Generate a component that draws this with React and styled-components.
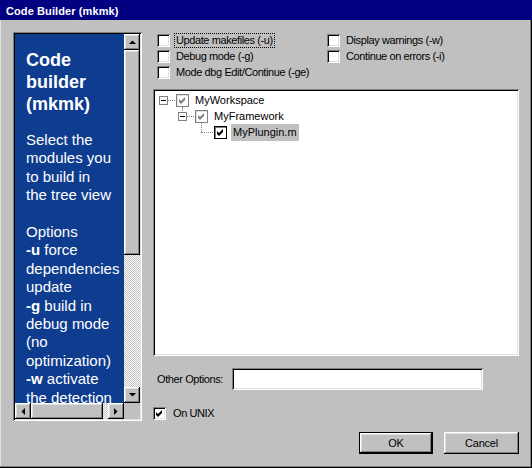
import React from 'react';
import styled, { createGlobalStyle, css } from 'styled-components';

const GlobalStyle = createGlobalStyle`
    html, body {
        margin: 0;
        padding: 0;
        background: #c0c0c0;
    }
    body {
        font-family: "Liberation Sans", Arial, sans-serif;
        font-size: 11px;
        color: #000;
    }
`;

const raised = css`
    box-shadow: inset -1px -1px #000, inset 1px 1px #fff,
        inset -2px -2px #808080, inset 2px 2px #dfdfdf;
`;

const sunken = css`
    box-shadow: inset 1px 1px #808080, inset -1px -1px #fff,
        inset 2px 2px #000, inset -2px -2px #dfdfdf;
`;

const checker = css`
    background: repeating-conic-gradient(#c0c0c0 0 25%, #fff 0 50%) 0 0 / 2px 2px;
`;

const Arrow = ({ dir }) => {
    const pts = {
        up: '0,4 7,4 3.5,0.5',
        down: '0,0 7,0 3.5,3.5',
        left: '4,0 4,7 0.5,3.5',
        right: '0,0 0,7 3.5,3.5',
    }[dir];
    const vertical = dir === 'up' || dir === 'down';
    return (
        <svg width={vertical ? 7 : 4} height={vertical ? 4 : 7}>
            <polygon points={pts} fill="#000" />
        </svg>
    );
};

const Check = ({ color = '#000' }) => (
    <svg width="13" height="13" viewBox="0 0 13 13">
        <path d="M3 5 L5 7 L9 3 L9 6 L5 10 L3 8 Z" fill={color} />
    </svg>
);

const Expander = () => (
    <svg width="9" height="9" viewBox="0 0 9 9">
        <rect x="0.5" y="0.5" width="8" height="8" fill="#fff" stroke="#808080" />
        <rect x="2" y="4" width="5" height="1" fill="#000" />
    </svg>
);

function App() {
    return (
        <>
            <GlobalStyle />
            <Window>
                <TitleBar>Code Builder (mkmk)</TitleBar>
                <Body>
                    <LeftPanel>
                        <Blue>
                            <Heading>
                                Code<br />builder<br />(mkmk)
                            </Heading>
                            <Text>
                                Select the<br />modules you<br />to build in<br />
                                the tree view<br /><br />Options<br />
                                <b>-u</b> force<br />dependencies<br />update<br />
                                <b>-g</b> build in<br />debug mode<br />(no<br />
                                optimization)<br />
                                <b>-w</b> activate<br />the detection
                            </Text>
                        </Blue>
                        <VScroll>
                            <ScrollBtn><Arrow dir="up" /></ScrollBtn>
                            <Thumb style={{ height: 205 }} />
                            <Track />
                            <ScrollBtn><Arrow dir="down" /></ScrollBtn>
                        </VScroll>
                        <HScroll>
                            <ScrollBtn><Arrow dir="left" /></ScrollBtn>
                            <Thumb style={{ width: 72 }} />
                            <Track />
                            <ScrollBtn><Arrow dir="right" /></ScrollBtn>
                        </HScroll>
                        <Corner />
                    </LeftPanel>

                    <RightPane>
                        <Options>
                            <OptionColumn>
                                <CheckRow>
                                    <Box />
                                    <Label focused>Update makefiles (-u)</Label>
                                </CheckRow>
                                <CheckRow>
                                    <Box />
                                    <Label>Debug mode (-g)</Label>
                                </CheckRow>
                                <CheckRow>
                                    <Box />
                                    <Label>Mode dbg Edit/Continue (-ge)</Label>
                                </CheckRow>
                            </OptionColumn>
                            <OptionColumn>
                                <CheckRow>
                                    <Box />
                                    <Label>Display warnings (-w)</Label>
                                </CheckRow>
                                <CheckRow>
                                    <Box />
                                    <Label>Continue on errors (-i)</Label>
                                </CheckRow>
                            </OptionColumn>
                        </Options>

                        <TreeBox>
                            <TreeRow level={0}>
                                <Joint>
                                    <Expander />
                                </Joint>
                                <TreeBoxCheck dim><Check color="#808080" /></TreeBoxCheck>
                                <NodeText>MyWorkspace</NodeText>
                            </TreeRow>
                            <TreeRow level={1}>
                                <Joint up>
                                    <Expander />
                                </Joint>
                                <TreeBoxCheck dim><Check color="#808080" /></TreeBoxCheck>
                                <NodeText>MyFramework</NodeText>
                            </TreeRow>
                            <TreeRow level={2}>
                                <Joint up leaf />
                                <TreeBoxCheck><Check /></TreeBoxCheck>
                                <NodeText selected>MyPlungin.m</NodeText>
                            </TreeRow>
                        </TreeBox>

                        <OtherRow>
                            <FieldLabel>Other Options:</FieldLabel>
                            <Input />
                        </OtherRow>

                        <UnixRow>
                            <Box><Check /></Box>
                            <Label>On UNIX</Label>
                        </UnixRow>

                        <ButtonRow>
                            <Button primary>OK</Button>
                            <Button>Cancel</Button>
                        </ButtonRow>
                    </RightPane>
                </Body>
            </Window>
        </>
    );
}

export default App;

const Window = styled.div`
    width: 532px;
    height: 468px;
    box-sizing: border-box;
    background: #c0c0c0;
    box-shadow: inset -1px -1px #000, inset -2px -2px #808080, inset 1px 0 #dfdfdf;
    display: flex;
    flex-direction: column;
`;

const TitleBar = styled.div`
    height: 20px;
    background: #000080;
    color: #fff;
    font-weight: bold;
    font-size: 11px;
    letter-spacing: 0.1px;
    display: flex;
    align-items: center;
    padding-left: 6px;
    padding-top: 1px;
    box-sizing: border-box;
`;

const Body = styled.div`
    display: flex;
    align-items: flex-start;
    gap: 11px;
    padding: 12px 0 0 13px;
`;

const LeftPanel = styled.div`
    width: 129px;
    height: 389px;
    box-sizing: border-box;
    padding: 2px;
    ${sunken};
    display: grid;
    grid-template-columns: 109px 16px;
    grid-template-rows: 369px 16px;
`;

const Blue = styled.div`
    background: #0e3c8e;
    color: #fff;
    padding: 15px 0 0 11px;
    overflow: hidden;
    white-space: nowrap;
`;

const Heading = styled.div`
    font-size: 18px;
    font-weight: bold;
    line-height: 22px;
    margin-bottom: 16px;
`;

const Text = styled.div`
    font-size: 15px;
    line-height: 18.4px;
`;

const VScroll = styled.div`
    display: flex;
    flex-direction: column;
`;

const HScroll = styled.div`
    display: flex;
`;

const ScrollBtn = styled.div`
    width: 16px;
    height: 16px;
    flex: none;
    background: #c0c0c0;
    ${raised};
    display: flex;
    align-items: center;
    justify-content: center;
`;

const Thumb = styled.div`
    flex: none;
    min-width: 16px;
    min-height: 16px;
    background: #c0c0c0;
    ${raised};
`;

const Track = styled.div`
    flex: 1;
    ${checker};
`;

const Corner = styled.div`
    background: #c0c0c0;
`;

const RightPane = styled.div`
    width: 366px;
    display: flex;
    flex-direction: column;
`;

const Options = styled.div`
    display: grid;
    grid-template-columns: 170px auto;
    padding-left: 4px;
`;

const OptionColumn = styled.div`
    display: flex;
    flex-direction: column;
`;

const CheckRow = styled.div`
    height: 16px;
    display: flex;
    align-items: center;
    gap: 5px;
`;

const Box = styled.span`
    width: 13px;
    height: 13px;
    flex: none;
    background: #fff;
    ${sunken};
    display: flex;
`;

const Label = styled.span`
    letter-spacing: -0.4px;
    line-height: 13px;
    padding: 0 1px;
    outline: ${(p) => (p.focused ? '1px dotted #000' : 'none')};
    outline-offset: 0;
`;

const TreeBox = styled.div`
    margin-top: 9px;
    height: 267px;
    box-sizing: border-box;
    background: #fff;
    ${sunken};
    padding: 3px 0 0 4px;
`;

const TreeRow = styled.div`
    height: 16px;
    display: flex;
    align-items: center;
    padding-left: ${(p) => p.level * 19}px;
`;

const Joint = styled.span`
    position: relative;
    width: 19px;
    height: 16px;
    flex: none;
    display: flex;
    align-items: center;
    padding-left: 2px;
    box-sizing: border-box;

    &::before {
        content: '';
        position: absolute;
        left: ${(p) => (p.leaf ? 6 : 11)}px;
        right: 1px;
        top: 8px;
        border-top: 1px dotted #808080;
    }

    &::after {
        content: ${(p) => (p.up ? "''" : 'none')};
        position: absolute;
        left: 6px;
        top: -1px;
        height: ${(p) => (p.leaf ? 9 : 4)}px;
        border-left: 1px dotted #808080;
    }
`;

const TreeBoxCheck = styled.span`
    width: 13px;
    height: 13px;
    flex: none;
    box-sizing: border-box;
    background: #fff;
    border: 1px solid ${(p) => (p.dim ? '#808080' : '#000')};
    box-shadow: ${(p) => (p.dim ? 'inset 1px 1px #dfdfdf' : 'inset 1px 1px #808080')};
    display: flex;
    align-items: center;
    justify-content: center;
    svg {
        margin: -1px;
    }
`;

const NodeText = styled.span`
    margin-left: 4px;
    padding: 2px 2px 3px;
    background: ${(p) => (p.selected ? '#c0c0c0' : 'transparent')};
`;

const OtherRow = styled.div`
    margin-top: 12px;
    display: flex;
    align-items: center;
    padding-left: 4px;
`;

const FieldLabel = styled.span`
    width: 75px;
    letter-spacing: -0.4px;
`;

const Input = styled.div`
    width: 251px;
    height: 22px;
    background: #fff;
    ${sunken};
`;

const UnixRow = styled(CheckRow)`
    margin-top: 15px;
    gap: 6px;
`;

const ButtonRow = styled.div`
    margin-top: 11px;
    display: flex;
    justify-content: flex-end;
    gap: 11px;
`;

const Button = styled.div`
    width: ${(p) => (p.primary ? 74 : 75)}px;
    height: 22px;
    box-sizing: border-box;
    display: flex;
    align-items: center;
    justify-content: center;
    background: #c0c0c0;
    letter-spacing: -0.2px;
    ${(p) =>
        p.primary
            ? css`
                  border: 1px solid #000;
                  ${raised};
              `
            : raised};
`;
